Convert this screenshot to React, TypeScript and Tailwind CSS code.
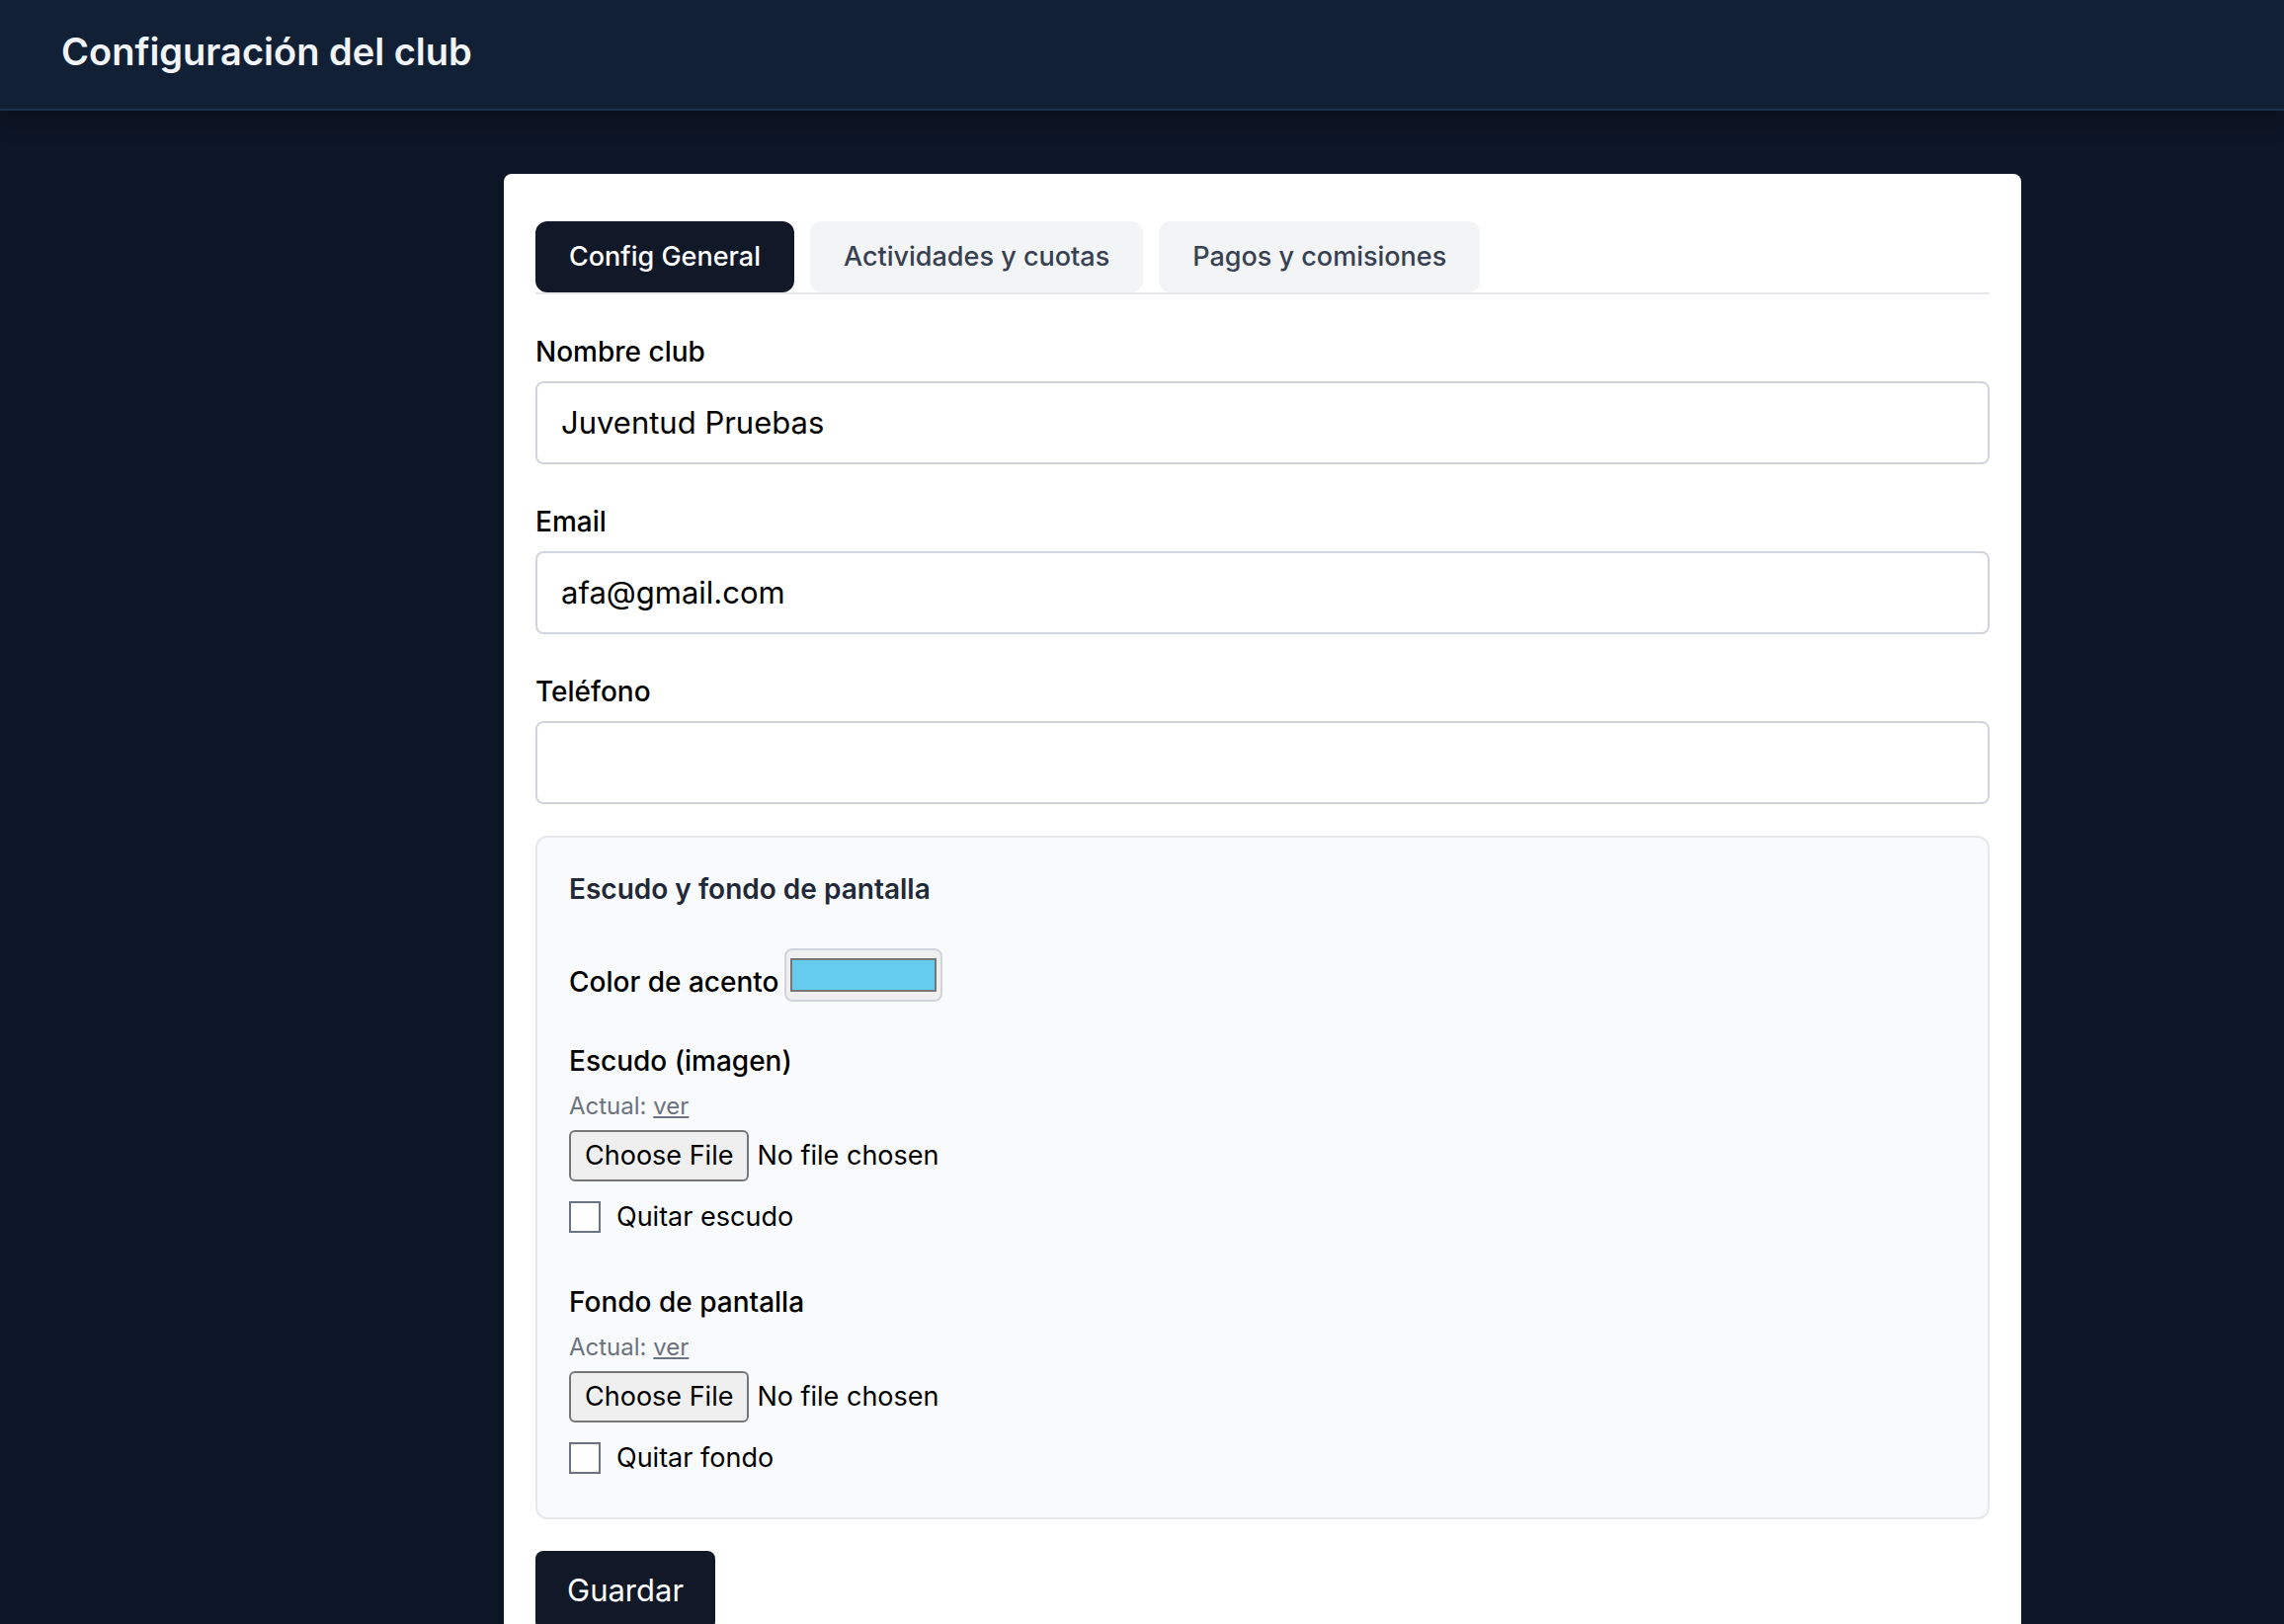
import { useState } from 'react'
import clsx from 'clsx'

const TABS = ['Config General', 'Actividades y cuotas', 'Pagos y comisiones']

interface TextFieldProps {
  id: string
  label: string
  type?: string
  defaultValue?: string
}

function TextField({ id, label, type = 'text', defaultValue = '' }: TextFieldProps) {
  return (
    <div>
      <label htmlFor={id} className="mb-2 block pt-1 text-[28px] leading-[44px] font-medium">
        {label}
      </label>
      <input
        id={id}
        type={type}
        defaultValue={defaultValue}
        className="block w-full rounded-lg border-2 border-[#d1d5db] bg-white px-6 py-4 text-[31px] leading-[48px]"
      />
    </div>
  )
}

interface ImageFieldProps {
  id: string
  label: string
  removeLabel: string
}

function ImageField({ id, label, removeLabel }: ImageFieldProps) {
  return (
    <div>
      <label htmlFor={id} className="block pt-1 text-[28px] leading-[44px] font-medium">
        {label}
      </label>
      <p className="my-2 text-[24px] leading-8 text-[#6b7280]">
        Actual:{' '}
        <a href="#" className="underline">
          ver
        </a>
      </p>
      <input
        id={id}
        type="file"
        className="block h-[52px] w-full text-[27px] leading-10 file:mr-2 file:h-[52px] file:rounded-md file:border-2 file:border-solid file:border-[#767676] file:bg-[#efefef] file:px-[14px] file:text-black"
      />
      <label className="mt-2 flex h-14 items-center gap-4 text-[27px]">
        <input
          type="checkbox"
          className="size-8 appearance-none border-2 border-[#6b7280] bg-white checked:bg-[#111827]"
        />
        {removeLabel}
      </label>
    </div>
  )
}

export default function App() {
  const [activeTab, setActiveTab] = useState(TABS[0])
  const [accent, setAccent] = useState('#66ccee')

  return (
    <div className="min-h-screen bg-[#0d1626] font-['Inter',sans-serif] text-black">
      <header className="relative border-b-2 border-[#18324e] bg-[#122036] px-[62px] pt-6 pb-[30px] shadow-[0_8px_24px_rgba(0,0,0,0.3)]">
        <h1 className="text-[38px] leading-14 font-semibold text-[#f1f5f9]">Configuración del club</h1>
      </header>

      <main className="pt-16 pb-16 pl-[244px]">
        <div className="mx-auto max-w-[1536px] rounded-lg bg-white px-8 pt-12 pb-8">
          <div className="mb-8 flex gap-4 border-b-2 border-[#e5e7eb]">
            {TABS.map((tab) => (
              <button
                key={tab}
                type="button"
                onClick={() => setActiveTab(tab)}
                className={clsx(
                  'rounded-xl px-[34px] py-4 text-[27px] leading-10 font-medium',
                  tab === activeTab ? 'bg-[#111827] text-white' : 'bg-[#f3f4f6] text-[#374151]'
                )}
              >
                {tab}
              </button>
            ))}
          </div>

          <form className="flex flex-col gap-8" onSubmit={(e) => e.preventDefault()}>
            <TextField id="nombre" label="Nombre club" defaultValue="Juventud Pruebas" />
            <TextField id="email" label="Email" type="email" defaultValue="afa@gmail.com" />
            <TextField id="telefono" label="Teléfono" type="tel" />

            <section className="flex flex-col gap-8 rounded-xl border-2 border-[#e5e7eb] bg-[#f9fafb] p-8">
              <h2 className="text-[28px] leading-10 font-semibold text-[#1f2937]">
                Escudo y fondo de pantalla
              </h2>

              <div className="flex h-16 items-center gap-1.5">
                <label htmlFor="acento" className="pt-5 text-[28px] leading-10 font-medium">
                  Color de acento
                </label>
                <input
                  id="acento"
                  type="color"
                  value={accent}
                  onChange={(e) => setAccent(e.target.value)}
                  className="mt-1.5 h-[54px] w-40 appearance-none rounded-lg border-2 border-[#d1d5db] bg-[#efefef] px-1 py-2 [&::-webkit-color-swatch]:border-2 [&::-webkit-color-swatch]:border-[#767676] [&::-webkit-color-swatch-wrapper]:p-0"
                />
              </div>

              <ImageField id="escudo" label="Escudo (imagen)" removeLabel="Quitar escudo" />
              <ImageField id="fondo" label="Fondo de pantalla" removeLabel="Quitar fondo" />
            </section>

            <button
              type="submit"
              className="self-start rounded-lg bg-[#111827] px-8 py-4 text-[31px] leading-[48px] text-white"
            >
              Guardar
            </button>
          </form>
        </div>
      </main>
    </div>
  )
}
